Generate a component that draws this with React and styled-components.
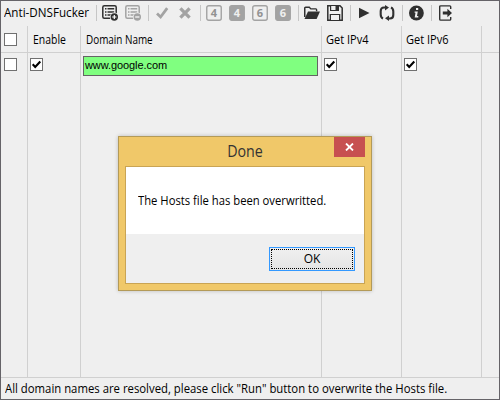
import React from 'react';
import styled, { createGlobalStyle } from 'styled-components';

const GlobalStyle = createGlobalStyle`
  * { box-sizing: border-box; }
  body { margin: 0; background: #efefef; font: 12px/16px "Open Sans", "Noto Sans", sans-serif; color: #000; }
`;

const Window = styled.main`
  position: relative;
  display: flex;
  flex-direction: column;
  width: 500px;
  height: 400px;
  border: 1px solid #656368;
  background: #efefef;
  overflow: hidden;
`;

const Label = styled.span`
  display: inline-block;
  white-space: nowrap;
  transform: scaleX(${p => p.$stretch || 1});
  transform-origin: ${p => p.$origin || 'left'} center;
`;

const Toolbar = styled.header`
  display: flex;
  align-items: flex-start;
  height: 25px;
  padding-top: 4px;
  flex: none;
`;

const AppName = styled.div`
  width: 95px;
  padding-left: 3px;
  flex: none;
`;

const Group = styled.div`
  display: flex;
  gap: 7px;
  padding: 0 7px 0 5px;
  border-left: 1px solid #c6c6c6;
  height: 16px;
`;

const Icon = styled.svg`
  display: block;
  width: 16px;
  height: 16px;
  flex: none;
  overflow: visible;
  color: ${p => (p.$disabled ? '#a3a3a3' : '#303030')};
`;

const Digit = styled.text`
  font: bold 11px "Open Sans", sans-serif;
  text-anchor: middle;
`;

const Grid = styled.section`
  display: grid;
  grid-template-columns: 27px 53px 241px 80px 80px 1fr;
  grid-template-rows: 27px 1fr;
  flex: 1;
`;

const Cell = styled.div`
  border-right: ${p => (p.$last ? 0 : 1)}px solid #d0d0d0;
  border-bottom: 1px solid #d0d0d0;
  padding: ${p => p.$pad || '0'};
`;

const Check = styled.span`
  display: block;
  width: 13px;
  height: 13px;
  border: 1px solid #707070;
  background: #fff;
`;

const Tick = styled.svg`
  display: block;
  width: 11px;
  height: 11px;
`;

const Field = styled.div`
  height: 20px;
  border: 1px solid #646464;
  background: #80ff80;
  padding-left: 1px;
  font: 11px/17px "Liberation Sans", sans-serif;
  letter-spacing: -0.08px;
`;

const Status = styled.footer`
  height: 21px;
  padding: 3px 4px 0;
  flex: none;
`;

const Dialog = styled.div`
  position: absolute;
  left: 117px;
  top: 135px;
  width: 254px;
  height: 155px;
  padding: 0 6px 6px;
  border: 1px solid #b39a58;
  background: #f0c869;
  box-shadow: 0 0 4px rgba(0, 0, 0, 0.22);
`;

const TitleBar = styled.div`
  display: grid;
  grid-template-columns: 31px 1fr 31px;
  height: 29px;
  font-size: 15.5px;
  line-height: 29px;
  text-align: center;
  color: #333;
`;

const Close = styled.button`
  display: grid;
  place-items: center;
  width: 31px;
  height: 20px;
  padding: 0;
  border: 0;
  background: #c75050;
`;

const DialogBody = styled.div`
  height: 118px;
  border: 1px solid #c9a454;
  background: #efefef;
`;

const Message = styled.div`
  height: 67px;
  padding: 26px 0 0 12px;
  background: #fff;
`;

const Actions = styled.div`
  display: flex;
  justify-content: flex-end;
  padding: 13px 9px 0 0;
`;

const Button = styled.button`
  width: 86px;
  height: 24px;
  padding: 1px;
  border: 1px solid #3399ff;
  background: linear-gradient(#f0f0f0, #e4e4e4);
  font: inherit;
  color: #000;
`;

const Focus = styled.span`
  display: block;
  height: 20px;
  border: 1px dotted #000;
  line-height: 18px;
`;

const Checkbox = ({ checked }) => (
  <Check>
    {checked && (
      <Tick viewBox="0 0 11 11">
        <path d="M1.7 5.2 4.2 7.9 9.3 2.5" fill="none" stroke="#000" strokeWidth="2.1" />
      </Tick>
    )}
  </Check>
);

const ListIcon = ({ disabled, plus }) => (
  <Icon $disabled={disabled} viewBox="0 0 16 16">
    <rect x=".8" y=".8" width="13.4" height="12.4" rx="1.5" fill="none" stroke="currentColor" strokeWidth="1.5" />
    <path d="M3 3.8h1.5M3 7h1.5M3 10h1.5M5.5 3.8h6.7M5.5 7h6.7M5.5 10h4" stroke="currentColor" strokeWidth="1.4" />
    <circle cx="12.3" cy="12" r="4.5" fill="#efefef" />
    <circle cx="12.3" cy="12" r="3.7" fill="currentColor" />
    <path d={plus ? 'M10.2 12h4.2M12.3 9.9v4.2' : 'M10.2 12h4.2'} stroke="#fff" strokeWidth="1.2" />
  </Icon>
);

const DigitIcon = ({ digit, solid }) => (
  <Icon $disabled viewBox="0 0 16 16">
    <rect x=".75" y=".75" width="14.5" height="14.5" rx="2" fill={solid ? 'currentColor' : '#efefef'} stroke="currentColor" strokeWidth="1.4" />
    <Digit x="8" y="12" fill={solid ? '#efefef' : '#929292'}>{digit}</Digit>
  </Icon>
);

export default function App() {
  return (
    <>
      <GlobalStyle />
      <Window>
        <Toolbar>
          <AppName><Label $stretch={0.97}>Anti-DNSFucker</Label></AppName>
          <Group>
            <ListIcon plus />
            <ListIcon disabled />
          </Group>
          <Group>
            <Icon $disabled viewBox="0 0 16 16"><path d="M3 8.6 6.6 12 13.2 3.2" fill="none" stroke="currentColor" strokeWidth="2.8" /></Icon>
            <Icon $disabled viewBox="0 0 16 16"><path d="M3.4 3.4 12.6 12.6M12.6 3.4 3.4 12.6" fill="none" stroke="currentColor" strokeWidth="3.3" /></Icon>
          </Group>
          <Group>
            <DigitIcon digit="4" />
            <DigitIcon digit="4" solid />
            <DigitIcon digit="6" />
            <DigitIcon digit="6" solid />
          </Group>
          <Group>
            <Icon viewBox="0 0 16 16">
              <path d="M.7 12V3.2q0-.9.9-.9h3.7l1.5 1.6h5q.8 0 .8.8V6.3M.8 12V3" fill="none" stroke="currentColor" strokeWidth="1.4" />
              <path d="M4 6.4h12L12.6 14H.5z" fill="currentColor" />
            </Icon>
            <Icon viewBox="0 0 16 16">
              <path d="M.8.8H13l2.2 2.2v12.2H.8z" fill="none" stroke="currentColor" strokeWidth="1.5" />
              <path d="M3 0h9v6H3zM2.7 9h10.6v6H2.7z" fill="currentColor" />
              <path d="M4.2 1h4.3v4H4.2zM4 10h8v5H4z" fill="#efefef" />
            </Icon>
          </Group>
          <Group>
            <Icon viewBox="0 0 16 16"><path d="M3 2.8 13.5 8 3 13.2z" fill="currentColor" /></Icon>
            <Icon viewBox="0 0 16 16">
              <path d="M6.8 2.5H5Q1.7 2.5 1.7 6v3.5q0 3 2.3 4M9.2 13.5H11q3.3 0 3.3-3.5V6.5q0-3-2.3-4" fill="none" stroke="currentColor" strokeWidth="2.1" />
              <path d="M6 0v5.5L10 2.6zM10 10.5V16l-4-2.8z" fill="currentColor" />
            </Icon>
          </Group>
          <Group>
            <Icon viewBox="0 0 16 16">
              <circle cx="8.4" cy="8" r="7.4" fill="currentColor" />
              <path d="M8 3h2.2v2H8zM6.6 6.4h3.2L9 11h1.3v1.4H6.7l.8-4.6h-.9z" fill="#efefef" />
            </Icon>
          </Group>
          <Group>
            <Icon viewBox="0 0 16 16">
              <path d="M13.7 4V1.8q0-.9-1-.9h-9q-1 0-1 .9v12.4q0 .9 1 .9h9q1 0 1-.9V12" fill="none" stroke="currentColor" strokeWidth="1.4" />
              <path d="M5.8 6.4h4.6V3.7L15 8l-4.6 4.3V9.6H5.8z" fill="currentColor" />
            </Icon>
          </Group>
        </Toolbar>
        <Grid>
          <Cell $pad="7px 0 0 3px"><Checkbox /></Cell>
          <Cell $pad="6px 0 0 5px"><Label $stretch={0.87}>Enable</Label></Cell>
          <Cell $pad="6px 0 0 5px"><Label $stretch={0.825}>Domain Name</Label></Cell>
          <Cell $pad="6px 0 0 4px"><Label $stretch={0.92}>Get IPv4</Label></Cell>
          <Cell $pad="6px 0 0 4px"><Label $stretch={0.92}>Get IPv6</Label></Cell>
          <Cell $last />
          <Cell $pad="5px 0 0 3px"><Checkbox /></Cell>
          <Cell $pad="5px 0 0 2px"><Checkbox checked /></Cell>
          <Cell $pad="3px 3px 0 2px"><Field>www.google.com</Field></Cell>
          <Cell $pad="5px 0 0 2px"><Checkbox checked /></Cell>
          <Cell $pad="5px 0 0 2px"><Checkbox checked /></Cell>
          <Cell $last />
        </Grid>
        <Status><Label $stretch={0.945}>All domain names are resolved, please click "Run" button to overwrite the Hosts file.</Label></Status>
        <Dialog role="dialog" aria-label="Done">
          <TitleBar>
            <span />
            <Label $stretch={0.92} $origin="center">Done</Label>
            <Close aria-label="Close">
              <svg width="9" height="8" viewBox="0 0 9 8"><path d="M1 .5 8 7.5M8 .5 1 7.5" stroke="#fff" strokeWidth="1.8" /></svg>
            </Close>
          </TitleBar>
          <DialogBody>
            <Message><Label $stretch={0.938}>The Hosts file has been overwritted.</Label></Message>
            <Actions><Button><Focus>OK</Focus></Button></Actions>
          </DialogBody>
        </Dialog>
      </Window>
    </>
  );
}
